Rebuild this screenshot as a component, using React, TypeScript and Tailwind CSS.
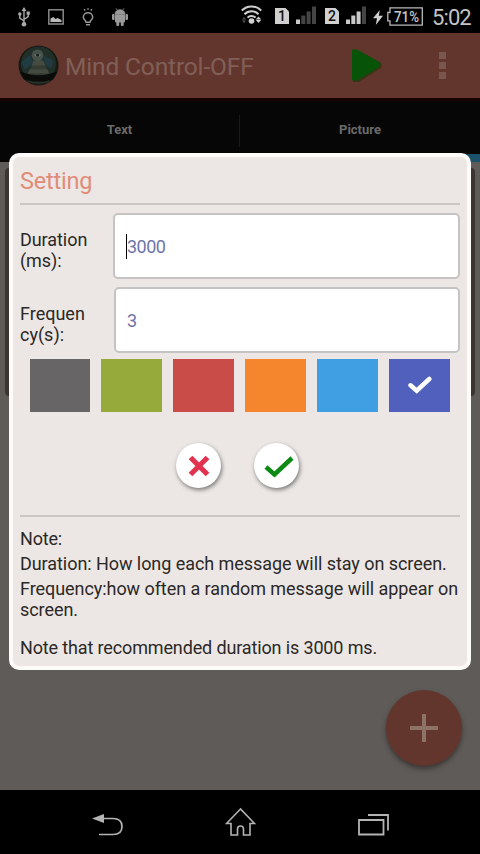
const swatches = [
  { name: 'grey', color: 'bg-[#676565]' },
  { name: 'green', color: 'bg-[#95aa3a]' },
  { name: 'red', color: 'bg-[#c94c49]' },
  { name: 'orange', color: 'bg-[#f6862e]' },
  { name: 'blue', color: 'bg-[#409fe3]' },
  { name: 'indigo', color: 'bg-[#5160bc]', selected: true },
]

function Signal({ dim }: { dim: boolean }) {
  return (
    <svg className="w-5 h-[18px]" viewBox="0 0 20 18">
      <rect x="0" y="13.5" width="4" height="4.5" fill="#c9c9c9" />
      <rect x="5.3" y="9.5" width="4" height="8.5" fill={dim ? '#444' : '#c9c9c9'} />
      <rect x="10.6" y="5.5" width="4" height="12.5" fill={dim ? '#444' : '#c9c9c9'} />
      <rect x="16" y="0.5" width="4" height="17.5" fill="#444" />
    </svg>
  )
}

function Sim({ slot }: { slot: string }) {
  return (
    <svg className="w-3.5 h-4" viewBox="0 0 14 16">
      <path d="M0 0h10.5L14 3.5V16H0z" fill="#d0d0d0" />
      <text x="7" y="13" textAnchor="middle" fontSize="14" fontWeight="500" fontFamily="Roboto" fill="#111">{slot}</text>
    </svg>
  )
}

function StatusBar() {
  return (
    <div className="h-[33px] shrink-0 bg-black flex items-start text-[#c4c4c4]">
      {/* Notifications */}
      <svg className="ml-[18px] mt-[7px] w-3 h-5" viewBox="0 0 12 20" fill="none" stroke="#aaa" strokeWidth="1.4">
        <path d="M6 3v13M1.8 8v3.2L6 14M10.2 6.5v3.2L6 12.5" />
        <path d="M6 0l2.4 4H3.6zM8.6 4.5h3.2v3.2H8.6z" fill="#aaa" stroke="none" />
        <circle cx="1.8" cy="7" r="1.7" fill="#aaa" stroke="none" />
        <circle cx="6" cy="17.3" r="2.3" fill="#aaa" stroke="none" />
      </svg>
      <svg className="ml-[18px] mt-[9px] w-4 h-4" viewBox="0 0 16 16">
        <rect x="0.8" y="0.8" width="14.4" height="14.2" fill="none" stroke="#888" strokeWidth="1.5" />
        <path d="M2.5 13V9.5l3-1.5 2 2 2-1 4 2v2z" fill="#bbb" />
      </svg>
      <svg className="ml-[17px] mt-[8px] w-[14px] h-[18px]" viewBox="0 0 14 18" fill="none" stroke="#999" strokeWidth="1.5">
        <path d="M5 14.2c0-2-2.7-2.500-2.700-5.200a4.700 4.300 0 0 1 9.400 0c0 2.700-2.700 3.200-2.700 5.200z" />
        <path d="M5 16.8h4M3.2 1.3l1 1.2M7 .3v1.5M10.8 1.3l-1 1.2" />
      </svg>
      <svg className="ml-[17px] mt-[8px] w-4 h-[18px]" viewBox="0 0 16 18" fill="#999">
        <path d="M3 6.3C3 3.5 5 1.8 8 1.8s5 1.7 5 4.5zM4 .3l1.5 2M12 .3l-1.5 2" stroke="#999" strokeWidth="0.8" />
        <rect x="3" y="6.5" width="10" height="8" rx="1" />
        <rect x="0" y="6" width="2.6" height="6" rx="1.1" />
        <rect x="13.4" y="6" width="2.6" height="6" rx="1.1" />
        <rect x="4.3" y="13" width="2.9" height="5" rx="1" />
        <rect x="8.8" y="13" width="2.9" height="5" rx="1" />
      </svg>
      {/* System */}
      <svg className="ml-[113px] mt-[4px] w-[21px] h-[21px]" viewBox="0 0 21 21" fill="none" stroke="#d0d0d0" strokeWidth="2">
        <path d="M.8 6.5a13.5 13.5 0 0 1 19.4 0M3.5 10.2a9.8 9.8 0 0 1 14 0M6.5 13.6a5.6 5.6 0 0 1 8 0" />
        <circle cx="10.5" cy="17" r="2.8" fill="#d0d0d0" stroke="none" />
        <path d="M17.5 12.5l2.8 3h-5.6zM17.5 19l2.6-3h-5.2z" fill="#d0d0d0" stroke="none" />
        <path d="M3 13l2 2.5H1zM3 19l2-2.5H1z" fill="#555" stroke="none" />
      </svg>
      <div className="ml-[13px] mt-2 flex"><Sim slot="1" /></div>
      <div className="ml-[7px] mt-1.5 flex"><Signal dim /></div>
      <div className="ml-[9px] mt-2 flex"><Sim slot="2" /></div>
      <div className="ml-[7px] mt-1.5 flex"><Signal dim={false} /></div>
      <svg className="ml-[7px] mt-[10px] w-[10px] h-[15px]" viewBox="0 0 10 15">
        <path d="M6.8 0L0 8.2h4L2.8 15 10 5.8H5.8z" fill="#d0d0d0" />
      </svg>
      <svg className="ml-[4px] mt-[7px] w-9 h-[19px]" viewBox="0 0 36 19">
        <path d="M3 .8h32.3v17.4H3v-4.4H.8V5.5H3z" fill="none" stroke="#bbb" strokeWidth="1.3" />
        <text x="19.5" y="14.7" textAnchor="middle" fontSize="14" fontWeight="500" fontFamily="Roboto" fill="#c8c8c8" textLength="25" lengthAdjust="spacingAndGlyphs">71%</text>
      </svg>
      <span className="ml-[9px] mt-[4px] text-[22px] leading-7 tracking-[-0.9px]">5:02</span>
    </div>
  )
}

function AppBar() {
  return (
    <header className="h-[65px] shrink-0 bg-[#63362d] flex items-center pl-[18px]">
      <svg className="w-[41px] h-[41px] shrink-0" viewBox="0 0 42 42">
        <circle cx="21" cy="21" r="20.5" fill="#151a15" />
        <circle cx="21" cy="19.5" r="18" fill="#222f28" />
        <path d="M3 18l9-8 4 9-9 6zM26 11l10 5-2 8-6-3z" fill="#203b42" />
        <path d="M21 9L9 31h24z" fill="#353d33" />
        <path d="M16 16h10l2 5H14zM12 25h18l2 4H10z" fill="#454b40" />
        <circle cx="20" cy="10.5" r="6" fill="#46504a" />
        <path d="M16 10.5q4-3.5 8 0q-4 3.5-8 0z" fill="#646c64" />
        <circle cx="20" cy="10.5" r="1.5" fill="#18201c" />
        <path d="M2 27q19 8 38 0l-4 8q-15 5-30 0z" fill="#0b0b09" />
        <path d="M10 37q11 4 22 0" stroke="#2c352c" strokeWidth="1.5" fill="none" />
      </svg>
      <h1 className="ml-[6px] pt-[2px] text-[24.5px] leading-8 tracking-[-0.15px] text-[#815f57] whitespace-nowrap">Mind Control-OFF</h1>
      <svg className="ml-auto mr-[56px] w-[32px] h-[34px]" viewBox="0 0 32 34">
        <path d="M2 1.5h5L29 13q3 3 1 6L8 33H2z" fill="#3a3517" />
        <path d="M1 .5h5L28 13q3 2.5 0 5L6 31.5H1z" fill="#075307" />
      </svg>
      <div className="mr-[34px] flex flex-col gap-[3px]">
        <i className="size-[7px] bg-[#7a574e]"></i>
        <i className="size-[7px] bg-[#7a574e]"></i>
        <i className="size-[7px] bg-[#7a574e]"></i>
      </div>
    </header>
  )
}

function Dialog() {
  return (
    <section className="absolute left-[9px] top-[153px] w-[462px] h-[517px] rounded-[10px] border-4 border-[#fcfbf9] bg-[#ece7e5] px-[7px] text-[18px] leading-[21px] tracking-[-0.06px] text-[#2b2827] flex flex-col">
      <h2 className="h-[46px] shrink-0 pt-[9px] text-[23.5px] leading-[31px] tracking-[-0.2px] text-[#e08c78]">Setting</h2>
      <hr className="h-0.5 shrink-0 border-0 bg-[#cbc6c4]" />

      <div className="mt-2 flex h-[66px] shrink-0">
        <label className="w-[93px] pt-4">Duration<br />(ms):</label>
        <div className="flex-1 rounded-[5px] border-2 border-[#c5c3c3] bg-white flex items-center pl-[11px] text-[#6f74a8]">
          <i className="w-px h-[25px] bg-black"></i>
          <span className="tracking-[-0.5px]">3000</span>
        </div>
      </div>
      <div className="mt-2 flex h-[66px] shrink-0">
        <label className="w-[94px] pt-4 tracking-normal">Frequen<br />cy(s):</label>
        <div className="flex-1 rounded-[5px] border-2 border-[#c5c3c3] bg-white flex items-center pl-[11px] text-[#6f74a8]">
          <span>3</span>
        </div>
      </div>

      <div className="mt-1.5 px-[10px] grid grid-cols-[60px_61px_61px_61px_61px_61px] gap-[11px] shrink-0">
        {swatches.map((s) => (
          <div key={s.name} className={`h-[53px] flex items-center justify-center ${s.color}`}>
            {s.selected && (
              <svg className="w-6 h-[18px] mb-0.5" viewBox="0 0 24 18" fill="none" stroke="#fff" strokeWidth="4.5" strokeLinecap="round" strokeLinejoin="miter">
                <path d="M2.5 9.3L8.7 14.7 21.3 3" />
              </svg>
            )}
          </div>
        ))}
      </div>

      <div className="mt-[31px] pl-[156px] flex gap-[33px] shrink-0">
        <div className="size-[45px] rounded-full bg-white shadow-[1px_2px_4px_#777] flex items-center justify-center">
          <svg className="w-[22px] h-[22px]" viewBox="0 0 22 22" fill="none" stroke="#e2324d" strokeWidth="5.2">
            <path d="M2.5 2.5l17 17M19.5 2.5l-17 17" />
          </svg>
        </div>
        <div className="size-[45px] rounded-full bg-white shadow-[1px_2px_4px_#777] flex items-center justify-center">
          <svg className="ml-1 mt-[3px] w-[30px] h-[24px]" viewBox="0 0 30 24" fill="none" stroke="#0c8a14" strokeWidth="4.5">
            <path d="M2 12l8.5 7.5L28 3" />
          </svg>
        </div>
      </div>

      <hr className="mt-[27px] h-0.5 shrink-0 border-0 bg-[#cbc6c4]" />
      <div className="mt-[11px] flex flex-col gap-1 whitespace-nowrap">
        <p className="tracking-[-0.2px]">Note:</p>
        <p>Duration: How long each message will stay on screen.</p>
        <p>Frequency:how often a random message will appear on<br />screen.</p>
        <p className="mt-[13px] tracking-[-0.14px]">Note that recommended duration is 3000 ms.</p>
      </div>
    </section>
  )
}

function NavBar() {
  return (
    <nav className="h-16 shrink-0 bg-black flex items-start">
      <svg className="ml-[91px] mt-[23px] w-8 h-[24px]" viewBox="0 0 32 24" fill="none" stroke="#b4b4b4" strokeWidth="1.7">
        <path d="M10 5.5h12q9 0 9 8t-9 8H8" />
        <path d="M1 5.500L13 1v9z" fill="#b4b4b4" stroke="none" />
      </svg>
      <svg className="ml-[102px] mt-[17px] w-[31px] h-[30px]" viewBox="0 0 31 30" fill="none" stroke="#b4b4b4" strokeWidth="1.6">
        <path d="M15.5 2L1.5 16.5h4.5V28h6.5v-6q0-3 3-3t3 3v6H25V16.5h4.5z" />
      </svg>
      <svg className="ml-[101px] mt-[23px] w-8 h-[24px]" viewBox="0 0 32 24" fill="none" stroke="#b4b4b4" strokeWidth="1.8">
        <path d="M2 7h24.5v14.5H2zM11 2h20v15.5" />
      </svg>
    </nav>
  )
}

export default function App() {
  return (
    <div className="relative w-[480px] h-[854px] overflow-hidden bg-[#5f5b58] font-[Roboto,sans-serif] flex flex-col">
      <StatusBar />
      <AppBar />

      {/* Tabs */}
      <div className="h-16 shrink-0 border-t-[3px] border-[#170302] bg-[#060606] flex text-[13px] leading-[57px] font-bold text-[#6b6b6b] text-center">
        <div className="w-[239px]">Text</div>
        <div className="mt-3.5 w-px h-8 bg-[#191919]"></div>
        <div className="w-[240px]">Picture</div>
      </div>

      {/* Card behind the dialog, only its edges show */}
      <div className="flex-1 px-[5px] pt-[6px]">
        <div className="h-[228px] border-x-4 border-[#3b3431] rounded-sm"></div>
      </div>
      <NavBar />

      <div className="absolute left-[240px] top-[154px] w-[240px] h-2 bg-[#1c5269]"></div>
      <div className="absolute left-[386px] top-[690px] size-[76px] rounded-full bg-[#63362d] shadow-[0_3px_5px_#3a3735] flex items-center justify-center">
        <svg className="w-7 h-7" viewBox="0 0 28 28" fill="none" stroke="#8c7365" strokeWidth="4">
          <path d="M14 0v28M0 14h28" />
        </svg>
      </div>

      <Dialog />
    </div>
  )
}
